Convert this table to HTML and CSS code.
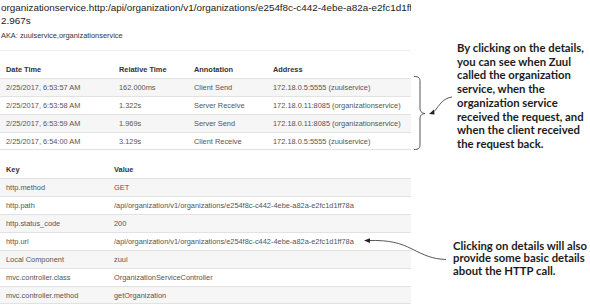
FILE: index.html
```html
<!DOCTYPE html>
<html>
<head>
<meta charset="utf-8">
<link rel="stylesheet" href="styles.css">
</head>
<body>
<div class="page">
  <div class="main">
    <div class="title">
      <div class="title-line">organizationservice.http:/api/organization/v1/organizations/e254f8c-c442-4ebe-a82a-e2fc1d1ff78a</div>
      <div class="title-line">2.967s</div>
    </div>
    <div class="aka">AKA: zuulservice,organizationservice</div>
    <div class="rule"></div>
    <div class="table spans">
      <div class="row head"><span>Date Time</span><span>Relative Time</span><span>Annotation</span><span>Address</span></div>
      <div class="row"><span>2/25/2017, 6:53:57 AM</span><span>162.000ms</span><span>Client Send</span><span>172.18.0.5:5555 (zuulservice)</span></div>
      <div class="row"><span>2/25/2017, 6:53:58 AM</span><span>1.322s</span><span>Server Receive</span><span>172.18.0.11:8085 (organizationservice)</span></div>
      <div class="row"><span>2/25/2017, 6:53:59 AM</span><span>1.969s</span><span>Server Send</span><span>172.18.0.11:8085 (organizationservice)</span></div>
      <div class="row"><span>2/25/2017, 6:54:00 AM</span><span>3.129s</span><span>Client Receive</span><span>172.18.0.5:5555 (zuulservice)</span></div>
    </div>
    <div class="table keys">
      <div class="row head"><span>Key</span><span>Value</span></div>
      <div class="row"><span>http.method</span><span>GET</span></div>
      <div class="row"><span>http.path</span><span>/api/organization/v1/organizations/e254f8c-c442-4ebe-a82a-e2fc1d1ff78a</span></div>
      <div class="row"><span>http.status_code</span><span>200</span></div>
      <div class="row"><span>http.url</span><span>/api/organization/v1/organizations/e254f8c-c442-4ebe-a82a-e2fc1d1ff78a</span></div>
      <div class="row"><span>Local Component</span><span>zuul</span></div>
      <div class="row"><span>mvc.controller.class</span><span>OrganizationServiceController</span></div>
      <div class="row"><span>mvc.controller.method</span><span>getOrganization</span></div>
    </div>
  </div>
  <div class="notes">
    <p class="note note-spans">By clicking on the details,<br>you can see when Zuul<br>called the organization<br>service, when the<br>organization service<br>received the request, and<br>when the client received<br>the request back.</p>
    <p class="note note-keys">Clicking on details will also<br>provide some basic details<br>about the HTTP call.</p>
  </div>
  <svg class="overlay" width="590" height="305" viewBox="0 0 590 305">
    <g fill="none" stroke="#444" stroke-width="0.9">
      <path d="M414 76.5 C419 76.5 420 78 420 82 L420 108 C420 111 421 113 425 113.5 C421 114 420 116 420 119 L420 144 C420 148 419 149.5 414 149.5"/>
      <path d="M452 97 C444 98 440 104 437 108 C435 111 433 112.5 432 113"/>
      <path d="M368 240.5 C390 240 400 243 412 249 C424 255 432 259 446 259.5"/>
    </g>
    <g fill="#222">
      <path d="M429 114 L434 109.5 L434.5 114.5 Z"/>
      <path d="M364 240.6 L370 238.2 L370 243 Z"/>
    </g>
  </svg>
</div>
</body>
</html>
```

FILE: styles.css
```css
html, body {
  margin: 0;
  padding: 0;
  background: #ffffff;
}

.page {
  position: relative;
  display: flex;
  width: 590px;
  height: 305px;
  overflow: hidden;
}

.main {
  width: 411px;
  flex: none;
  font-family: "Liberation Sans", Arial, sans-serif;
}

.title {
  padding: 1px 0 0 1px;
  font-size: 9.9px;
  line-height: 13px;
  color: #222;
}

.title-line {
  white-space: nowrap;
  overflow: hidden;
}

.aka {
  margin-top: 4px;
  padding-left: 1px;
  font-size: 7.4px;
  line-height: 10px;
  color: #333;
}

.rule {
  margin-top: 9px;
  height: 1px;
  background: #eeeeee;
}

.table {
  font-size: 7.4px;
  color: #555;
}

.spans {
  margin-top: 9px;
}

.keys {
  margin-top: 10px;
}

.row {
  display: grid;
  height: 18px;
  align-items: center;
  border-top: 1px solid #e2e2e2;
  box-sizing: border-box;
}

.row span {
  padding-left: 6px;
  white-space: nowrap;
  overflow: hidden;
}

.row.head {
  border-top: none;
  font-weight: bold;
  color: #333;
}

.spans .row {
  grid-template-columns: 113px 75px 79px 1fr;
}

.keys .row {
  grid-template-columns: 108px 1fr;
}

.table .row:nth-child(even) {
  background: #f6f6f6;
}

.table .row:last-child {
  border-bottom: 1px solid #e2e2e2;
}

.notes {
  flex: 1;
  display: flex;
  flex-direction: column;
  padding-left: 46px;
  font-family: Lato, "DejaVu Sans", sans-serif;
  font-weight: bold;
  color: #1c1c1c;
}

.note {
  margin: 0;
  font-size: 11.3px;
  line-height: 13.7px;
  white-space: nowrap;
}

.note-spans {
  margin-top: 41px;
}

.note-keys {
  margin-top: 89px;
  margin-left: -4px;
  line-height: 12.6px;
}

.overlay {
  position: absolute;
  left: 0;
  top: 0;
  pointer-events: none;
}
```
